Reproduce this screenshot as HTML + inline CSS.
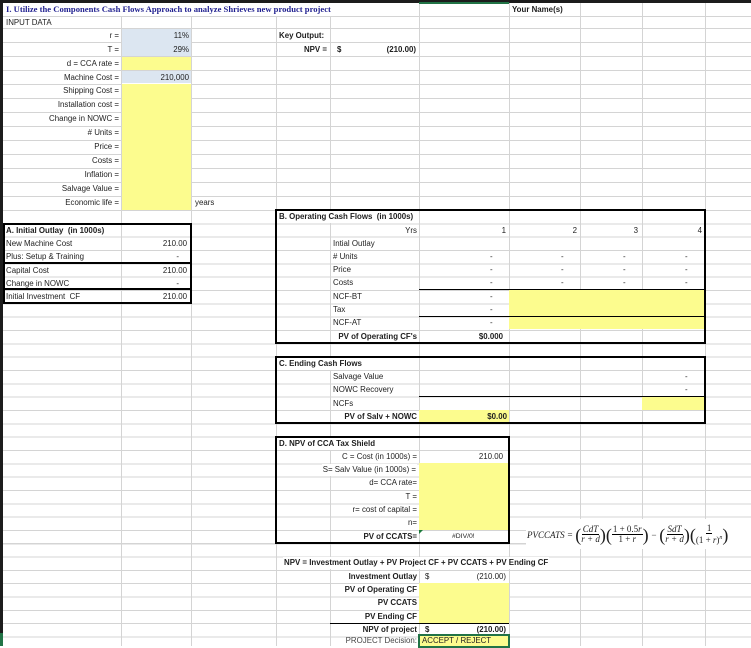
<!DOCTYPE html>
<html><head><meta charset="utf-8"><style>
*{margin:0;padding:0;box-sizing:border-box}
body{width:751px;height:646px;overflow:hidden;background:#fff;position:relative;font-family:"Liberation Sans",sans-serif;font-size:7.9px;color:#1e1e1e}
.a{position:absolute}
.t{position:absolute;white-space:nowrap;line-height:13px;height:13px}
.w{background:#fff;height:12px;line-height:12px;margin-top:1px;padding-right:1px}
.b{font-weight:bold}
.v{position:absolute;top:0;width:1px;height:646px;background:#d4d4d4}
.y{position:absolute;background:#fcfc8e}
.bl{position:absolute;background:#dce6f1}
.box{position:absolute;border:2px solid #000}
.hl{position:absolute;height:1px;background:#000}
.fr{display:inline-flex;flex-direction:column;align-items:center;vertical-align:middle;line-height:9px}
.fr span:first-child{border-bottom:0.8px solid #000;padding:0 1px}
.p{font-size:18px;font-style:normal;vertical-align:middle;font-weight:100}
</style></head><body>
<div class="a" style="left:0;top:28px;width:751px;height:182px;background:repeating-linear-gradient(to bottom,#d4d4d4 0 1px,transparent 1px 14px)"></div>
<div class="a" style="left:0;top:210px;width:751px;height:436px;background:repeating-linear-gradient(to bottom,#d4d4d4 0 1px,transparent 1px 13.33px)"></div>
<div class="a" style="left:0;top:16px;width:751px;height:1px;background:#d4d4d4"></div>
<div class="v" style="left:121px"></div><div class="v" style="left:191px"></div><div class="v" style="left:276px"></div>
<div class="v" style="left:330px"></div><div class="v" style="left:419px"></div><div class="v" style="left:509px"></div>
<div class="v" style="left:580px"></div><div class="v" style="left:642px"></div><div class="v" style="left:705px"></div>
<div class="a" style="left:0;top:0;width:751px;height:3px;background:#1c1c1c"></div>
<div class="a" style="left:419px;top:2px;width:90px;height:2px;background:#217346"></div>
<div class="a" style="left:0;top:0;width:3px;height:646px;background:#1c1c1c"></div>
<div class="a" style="left:0;top:633px;width:3px;height:13px;background:#217346"></div>

<div class="bl" style="left:122px;top:29px;width:69px;height:27px"></div>
<div class="y" style="left:122px;top:57px;width:69px;height:13px"></div>
<div class="bl" style="left:122px;top:71px;width:69px;height:12px"></div>
<div class="y" style="left:122px;top:84px;width:69px;height:126px"></div>
<div class="y" style="left:509px;top:290px;width:196px;height:26px"></div>
<div class="y" style="left:509px;top:317px;width:196px;height:12px"></div>
<div class="y" style="left:642px;top:397px;width:63px;height:13px"></div>
<div class="y" style="left:419px;top:410px;width:90px;height:13px"></div>
<div class="y" style="left:419px;top:463px;width:90px;height:67px"></div>
<div class="y" style="left:419px;top:583px;width:90px;height:40px"></div>
<div class="y" style="left:419px;top:636px;width:90px;height:10px"></div>
<div class="a" style="left:419px;top:530px;width:0;height:0;border-top:4px solid #1a7a3a;border-right:4px solid transparent"></div>

<div class="t b" style="left:5px;top:3px;font-family:'Liberation Serif',serif;font-size:8.6px;color:#1f1f8f;background:#fff;height:13px;padding:0 1px">I. Utilize the Components Cash Flows Approach to analyze Shrieves new product project</div>
<div class="t b" style="left:512px;top:3px">Your Name(s)</div>
<div class="t" style="left:6px;top:16px">INPUT DATA</div>

<div class="t" style="right:632px;top:29px">r =</div>
<div class="t" style="right:562px;top:29px">11%</div>
<div class="t b" style="left:279px;top:29px">Key Output:</div>
<div class="t" style="right:632px;top:43px">T =</div>
<div class="t" style="right:562px;top:43px">29%</div>
<div class="t b" style="right:424px;top:43px">NPV =</div>
<div class="t b" style="left:337px;top:43px">$</div>
<div class="t b" style="right:335px;top:43px">(210.00)</div>
<div class="t" style="right:632px;top:57px">d = CCA rate =</div>
<div class="t" style="right:632px;top:71px">Machine Cost =</div>
<div class="t" style="right:562px;top:71px">210,000</div>
<div class="t" style="right:632px;top:84px">Shipping Cost =</div>
<div class="t" style="right:632px;top:98px">Installation cost =</div>
<div class="t" style="right:632px;top:112px">Change in NOWC =</div>
<div class="t" style="right:632px;top:126px"># Units =</div>
<div class="t" style="right:632px;top:140px">Price =</div>
<div class="t" style="right:632px;top:154px">Costs =</div>
<div class="t" style="right:632px;top:168px">Inflation =</div>
<div class="t" style="right:632px;top:182px">Salvage Value =</div>
<div class="t" style="right:632px;top:196px">Economic life =</div>
<div class="t" style="left:195px;top:196px">years</div>

<div class="box" style="left:3px;top:223px;width:189px;height:81px"></div>
<div class="hl" style="left:3px;top:262px;width:189px;height:2px"></div>
<div class="hl" style="left:3px;top:288px;width:189px;height:2px"></div>
<div class="t b" style="left:6px;top:224px">A. Initial Outlay&nbsp; (in 1000s)</div>
<div class="t" style="left:6px;top:237px">New Machine Cost</div><div class="t" style="right:564px;top:237px">210.00</div>
<div class="t" style="left:6px;top:250px">Plus: Setup &amp; Training</div><div class="t" style="right:572px;top:250px">-</div>
<div class="t" style="left:6px;top:264px">Capital Cost</div><div class="t" style="right:564px;top:264px">210.00</div>
<div class="t" style="left:6px;top:277px">Change in NOWC</div><div class="t" style="right:572px;top:277px">-</div>
<div class="t" style="left:6px;top:290px">Initial Investment&nbsp; CF</div><div class="t" style="right:564px;top:290px">210.00</div>

<div class="box" style="left:275px;top:209px;width:431px;height:135px"></div>
<div class="hl" style="left:419px;top:289px;width:286px"></div>
<div class="hl" style="left:419px;top:316px;width:286px"></div>
<div class="t b w" style="left:279px;top:210px">B. Operating Cash Flows&nbsp; (in 1000s)</div>
<div class="t" style="right:334px;top:224px">Yrs</div>
<div class="t" style="right:245px;top:224px">1</div><div class="t" style="right:174px;top:224px">2</div><div class="t" style="right:113px;top:224px">3</div><div class="t" style="right:49px;top:224px">4</div>
<div class="t" style="left:333px;top:237px">Intial Outlay</div>
<div class="t" style="left:333px;top:250px"># Units</div>
<div class="t" style="left:333px;top:263px">Price</div>
<div class="t" style="left:333px;top:276px">Costs</div>
<div class="t" style="left:333px;top:290px">NCF-BT</div>
<div class="t" style="left:333px;top:303px">Tax</div>
<div class="t" style="left:333px;top:316px">NCF-AT</div>
<div class="t b" style="right:334px;top:330px">PV of Operating CF's</div>
<div class="t b" style="right:248px;top:330px">$0.000</div>
<div class="t" style="left:490px;top:250px">-</div><div class="t" style="left:561px;top:250px">-</div><div class="t" style="left:623px;top:250px">-</div><div class="t" style="left:685px;top:250px">-</div>
<div class="t" style="left:490px;top:263px">-</div><div class="t" style="left:561px;top:263px">-</div><div class="t" style="left:623px;top:263px">-</div><div class="t" style="left:685px;top:263px">-</div>
<div class="t" style="left:490px;top:276px">-</div><div class="t" style="left:561px;top:276px">-</div><div class="t" style="left:623px;top:276px">-</div><div class="t" style="left:685px;top:276px">-</div>
<div class="t" style="left:490px;top:290px">-</div><div class="t" style="left:490px;top:303px">-</div><div class="t" style="left:490px;top:316px">-</div>

<div class="box" style="left:275px;top:356px;width:431px;height:68px"></div>
<div class="hl" style="left:419px;top:396px;width:286px"></div>
<div class="t b w" style="left:279px;top:357px">C. Ending Cash Flows</div>
<div class="t" style="left:333px;top:370px">Salvage Value</div><div class="t" style="left:685px;top:370px">-</div>
<div class="t" style="left:333px;top:383px">NOWC Recovery</div><div class="t" style="left:685px;top:383px">-</div>
<div class="t" style="left:333px;top:397px">NCFs</div>
<div class="t b" style="right:334px;top:410px">PV of Salv + NOWC</div>
<div class="t b" style="right:244px;top:410px">$0.00</div>

<div class="box" style="left:275px;top:436px;width:235px;height:108px"></div>
<div class="t b w" style="left:279px;top:437px">D. NPV of CCA Tax Shield</div>
<div class="t" style="right:334px;top:450px">C = Cost (in 1000s) =</div><div class="t" style="right:248px;top:450px">210.00</div>
<div class="t w" style="right:334px;top:463px;padding-left:1px">S= Salv Value (in 1000s) =</div>
<div class="t" style="right:334px;top:476px">d= CCA rate=</div>
<div class="t" style="right:334px;top:490px">T =</div>
<div class="t" style="right:334px;top:503px">r= cost of capital =</div>
<div class="t" style="right:334px;top:516px">n=</div>
<div class="t b" style="right:334px;top:530px">PV of CCATS=</div>
<div class="t" style="left:452px;top:530px;font-size:6.8px">#DIV/0!</div>

<div class="a" style="left:526px;top:519px;width:225px;height:30px;background:#fff;font-family:'Liberation Serif',serif;font-style:italic;font-size:9px;white-space:nowrap;line-height:30px;padding-left:1px">
<span style="vertical-align:middle">PVCCATS = </span><span class="p">(</span><span class="fr"><span>CdT</span><span>r + d</span></span><span class="p">)(</span><span class="fr"><span style="font-style:normal">1 + 0.5<i>r</i></span><span style="font-style:normal">1 + <i>r</i></span></span><span class="p">)</span><span style="vertical-align:middle"> − </span><span class="p">(</span><span class="fr"><span>SdT</span><span>r + d</span></span><span class="p">)(</span><span class="fr"><span style="font-style:normal">1</span><span style="font-style:normal">(1 + <i>r</i>)<sup style="font-size:6px"><i>n</i></sup></span></span><span class="p">)</span>
</div>

<div class="t b w" style="left:283px;top:556px;padding-left:1px">NPV = Investment Outlay + PV Project CF + PV CCATS + PV Ending CF</div>
<div class="t b" style="right:334px;top:570px">Investment Outlay</div><div class="t" style="left:425px;top:570px">$</div><div class="t" style="right:245px;top:570px">(210.00)</div>
<div class="t b" style="right:334px;top:583px">PV of Operating CF</div>
<div class="t b" style="right:334px;top:596px">PV CCATS</div>
<div class="t b" style="right:334px;top:610px">PV Ending CF</div>
<div class="hl" style="left:330px;top:623px;width:179px"></div>
<div class="t b" style="right:334px;top:623px">NPV of project</div><div class="t b" style="left:425px;top:623px">$</div><div class="t b" style="right:245px;top:623px">(210.00)</div>
<div class="t" style="right:334px;top:634px;color:#444">PROJECT Decision:</div>
<div class="a" style="left:418px;top:634px;width:92px;height:14px;border:2px solid #217346"></div>
<div class="t" style="left:422px;top:634px">ACCEPT / REJECT</div>
</body></html>
